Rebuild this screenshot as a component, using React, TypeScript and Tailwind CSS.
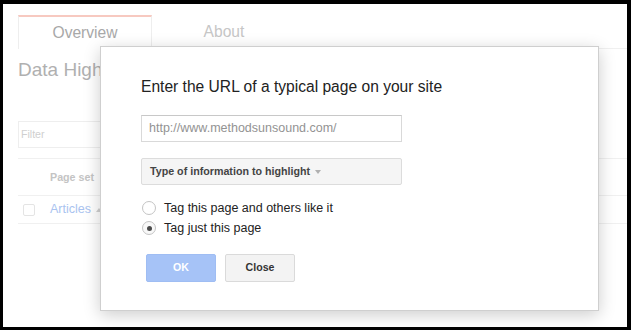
import React from "react";

export default function App() {
  return (
    <div className="w-[631px] h-[330px] bg-black pt-[4px] pl-[3px] pr-[4px] pb-[3px] font-['Liberation_Sans',Arial,sans-serif]">
      <div className="relative w-full h-full bg-white overflow-hidden">
        {/* background page */}
        <div className="flex flex-col pt-[11px]">
          {/* tabs */}
          <div className="flex items-end">
            <div className="w-[15px] h-[34px]" />
            <div className="w-[134px] h-[34px] border-t-2 border-l border-r border-[#eeeeee] border-t-[#f7c9c0] flex items-center justify-center text-[15.6px] text-[#a8a8a8]">
              Overview
            </div>
            <div className="w-[144px] h-[34px] border-b border-[#f0f0f0] flex items-center justify-center text-[15.6px] text-[#c6c6c6]">
              About
            </div>
            <div className="flex-1 h-[34px] border-b border-[#f0f0f0]" />
          </div>
          {/* title */}
          <div className="pl-[15px] mt-[9px] h-[24px] leading-[24px] text-[19px] text-[#b0b0b0] whitespace-nowrap">
            Data Highlighter
          </div>
          {/* filter */}
          <div className="ml-[15px] mt-[39px] pb-[10px] border-b border-[#f0f0f0]">
            <div className="w-[220px] h-[27px] border border-[#eeeeee] flex items-center pl-[2px] text-[10.6px] text-[#cfcfcf]">
              Filter
            </div>
          </div>
          {/* header row */}
          <div className="ml-[15px] h-[37px] border-b border-[#f0f0f0] flex items-center pl-[32px] text-[10.7px] font-bold text-[#c4c4c4]">
            Page set
          </div>
          {/* data row */}
          <div className="ml-[15px] h-[28px] border-b border-[#f0f0f0] flex items-center">
            <div className="ml-[5px] w-[12px] h-[12px] border border-[#e4e4e4] rounded-[2px]" />
            <div className="ml-[15px] text-[12.5px] text-[#a9c3f0]">Articles</div>
            <div className="ml-[5px] w-0 h-0 border-l-[3px] border-r-[3px] border-b-[4px] border-l-transparent border-r-transparent border-b-[#d0d0d0]" />
          </div>
        </div>

        {/* dialog */}
        <div className="absolute left-[97px] top-[42px] w-[499px] h-[265px] bg-white border border-[#cfcfcf] shadow-[0_4px_16px_rgba(0,0,0,0.2)] pl-[40px] pt-[30px] flex flex-col">
          <div className="h-[20px] leading-[20px] text-[15.6px] text-[#222222] whitespace-nowrap">
            Enter the URL of a typical page on your site
          </div>
          <div className="mt-[18px] w-[261px] h-[27px] border border-[#d9d9d9] border-t-[#c8c8c8] flex items-center pl-[7px] text-[12.5px] text-[#939393]">
            http://www.methodsunsound.com/
          </div>
          <div className="mt-[16px] w-[261px] h-[27px] border border-[#dcdcdc] rounded-[2px] bg-[#f5f5f5] flex items-center pl-[8px] text-[10.7px] font-bold text-[#444444]">
            <span>Type of information to highlight</span>
            <span className="ml-[5px] w-0 h-0 border-l-[3.5px] border-r-[3.5px] border-t-[4px] border-l-transparent border-r-transparent border-t-[#b0b0b0]" />
          </div>
          <div className="mt-[13px] flex flex-col">
            <div className="h-[20px] flex items-center">
              <div className="ml-[1px] w-[14px] h-[14px] rounded-full border border-[#c4c4c4] bg-white" />
              <span className="ml-[8px] text-[12.5px] text-[#222222]">Tag this page and others like it</span>
            </div>
            <div className="h-[20px] flex items-center">
              <div className="ml-[1px] w-[14px] h-[14px] rounded-full border border-[#c4c4c4] bg-[#f8f8f8] flex items-center justify-center">
                <div className="w-[5px] h-[5px] rounded-full bg-[#4a4a4a]" />
              </div>
              <span className="ml-[8px] text-[12.5px] text-[#222222]">Tag just this page</span>
            </div>
          </div>
          <div className="mt-[16px] ml-[5px] flex gap-[9px]">
            <div className="w-[70px] h-[28px] rounded-[2px] bg-[#a6c3f7] border border-[#9fbdf3] flex items-center justify-center text-[10.6px] font-bold text-white">
              OK
            </div>
            <div className="w-[70px] h-[28px] rounded-[2px] bg-[#f3f3f3] border border-[#dadada] flex items-center justify-center text-[10.6px] font-bold text-[#333333]">
              Close
            </div>
          </div>
        </div>
      </div>
    </div>
  );
}
